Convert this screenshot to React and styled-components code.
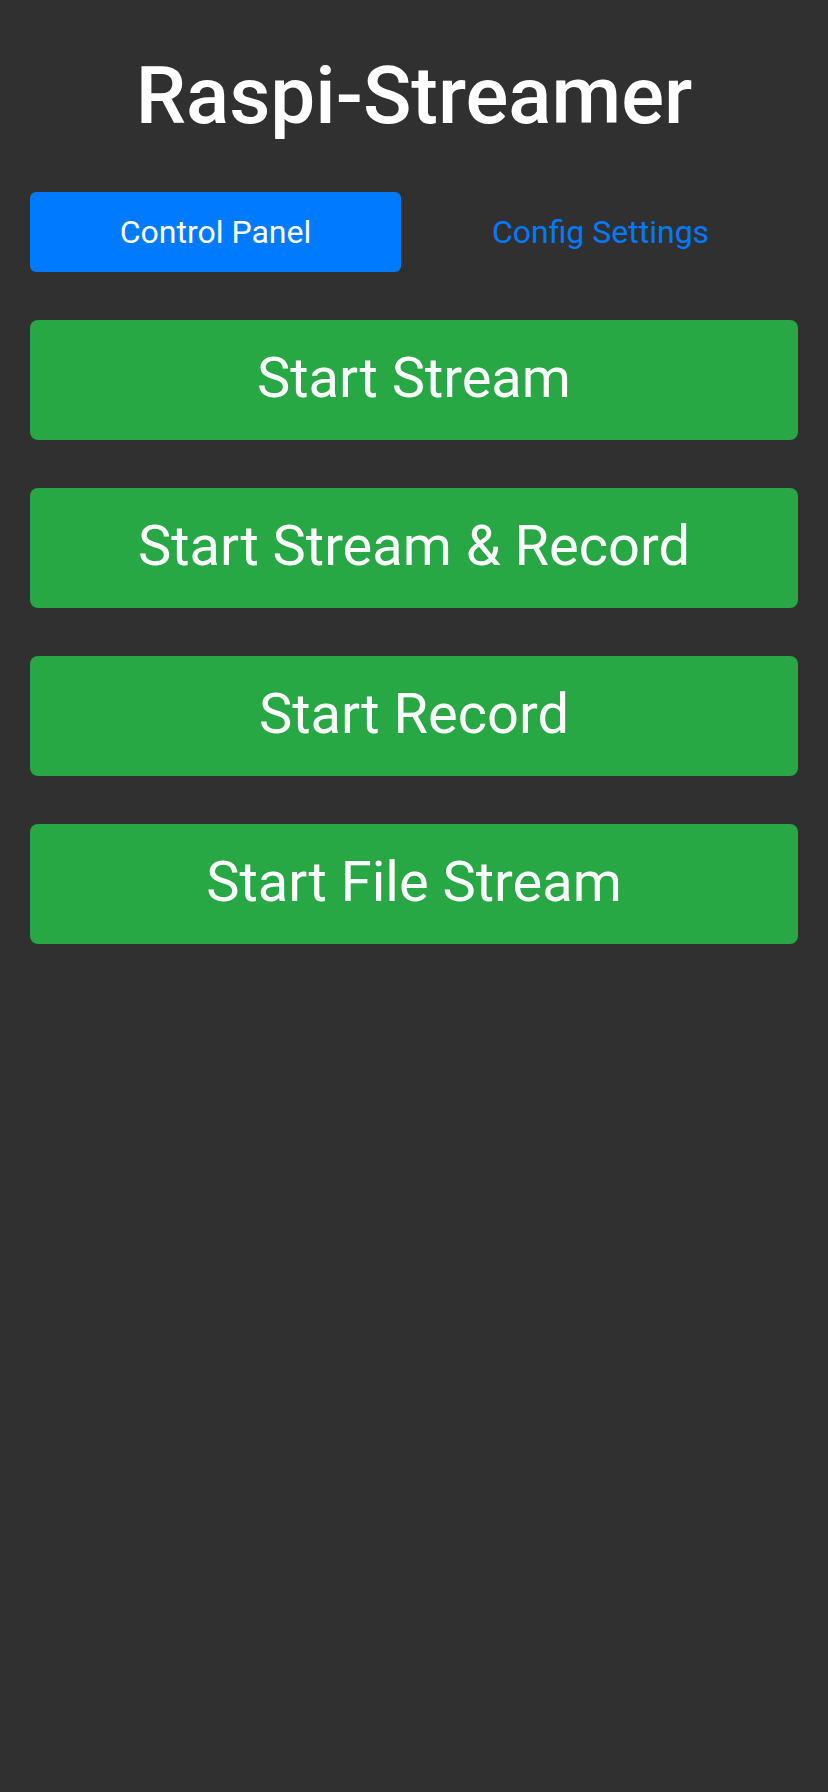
import React, {useState} from 'react';
import styled, {createGlobalStyle} from 'styled-components';

const GlobalStyle = createGlobalStyle`
  html, body {
    margin: 0;
    padding: 0;
    background: #303030;
  }
  body {
    font-family: Roboto, "Liberation Sans", sans-serif;
    min-height: 1792px;
  }
`;

const Page = styled.div`
  min-height: 1792px;
  background: #303030;
  padding: 0 30px;
  box-sizing: border-box;
`;

const Title = styled.h1`
  margin: 0;
  padding-top: 48px;
  height: 144px;
  box-sizing: border-box;
  text-align: center;
  color: #fff;
  font-size: 80px;
  font-weight: 500;
  line-height: 96px;
`;

const Tabs = styled.div`
  display: grid;
  grid-template-columns: 371px 371px;
  column-gap: 14px;
  margin-top: 48px;
`;

const Tab = styled.button`
  height: 80px;
  border: 0;
  border-radius: 6px;
  font-family: inherit;
  font-size: 32px;
  cursor: pointer;
  background: ${props => (props.active ? '#007bff' : 'transparent')};
  color: ${props => (props.active ? '#fff' : '#007bff')};
`;

const Actions = styled.div`
  display: flex;
  flex-direction: column;
  gap: 48px;
  margin-top: 48px;
`;

const ActionBtn = styled.button`
  height: 120px;
  padding: 0 0 4px;
  border: 0;
  border-radius: 8px;
  background: #28a745;
  color: #fff;
  font-family: inherit;
  font-size: 56px;
  cursor: pointer;
`;

const actions = ['Start Stream', 'Start Stream & Record', 'Start Record', 'Start File Stream'];

export default function App() {
  const [tab, setTab] = useState('control');

  return (
    <Page>
      <GlobalStyle />
      <Title>Raspi-Streamer</Title>
      <Tabs>
        <Tab active={tab === 'control'} onClick={() => setTab('control')}>
          Control Panel
        </Tab>
        <Tab active={tab === 'config'} onClick={() => setTab('config')}>
          Config Settings
        </Tab>
      </Tabs>
      <Actions>
        {actions.map(label => (
          <ActionBtn key={label}>{label}</ActionBtn>
        ))}
      </Actions>
    </Page>
  );
}
